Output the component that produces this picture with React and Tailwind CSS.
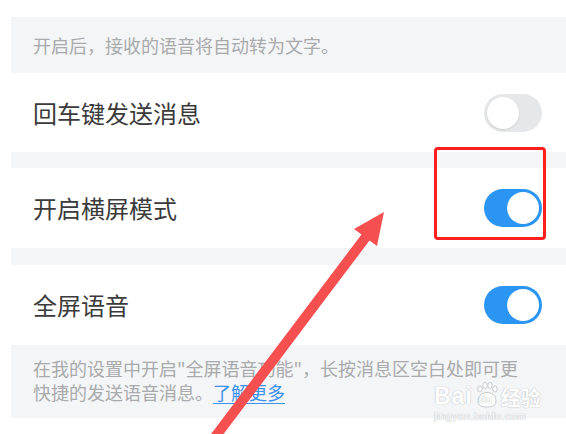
import React from "react";

function Toggle({ on }) {
  return (
    <div
      className={
        on
          ? "flex h-[38px] w-[58px] items-center justify-end rounded-full bg-[#2b95f4] p-[3px]"
          : "flex h-[38px] w-[58px] items-center justify-start rounded-full bg-[#e6e7e8] p-[3px]"
      }
    >
      <div
        className={
          on
            ? "h-[32px] w-[32px] rounded-full bg-white"
            : "h-[32px] w-[32px] rounded-full bg-white shadow-[0_1px_2px_rgba(0,0,0,0.12)]"
        }
      />
    </div>
  );
}

function Row({ label, on, height }) {
  return (
    <div
      className={`flex items-center justify-between bg-white pl-[22px] pr-[24px] ${height}`}
    >
      <span className="text-[24px] leading-none text-[#3b3b3b]">{label}</span>
      <Toggle on={on} />
    </div>
  );
}

function Watermark() {
  return (
    <div className="absolute left-[434px] top-[382px] flex flex-col items-start text-white [text-shadow:0_0_1px_#b9bcc2,0_0_1px_#b9bcc2]">
      <div className="flex items-end">
        <span className="text-[23px] font-bold leading-none tracking-[1px] font-['Liberation_Sans',sans-serif]">
          Bai
        </span>
        <div className="relative mx-[2px] h-[26px] w-[24px]">
          <svg width="24" height="26" viewBox="0 0 24 26" className="absolute left-0 top-0">
            <g fill="#ffffff" stroke="#b9bcc2" strokeWidth="0.8">
              <ellipse cx="5" cy="7" rx="2.2" ry="3" />
              <ellipse cx="10" cy="3.5" rx="2.2" ry="3" />
              <ellipse cx="15" cy="3.5" rx="2.2" ry="3" />
              <ellipse cx="20" cy="7" rx="2.2" ry="3" />
              <path d="M3 19 C3 13 8 10.5 12 10.5 C16 10.5 21 13 21 19 C21 23 18 25 12 25 C6 25 3 23 3 19 Z" />
            </g>
          </svg>
          <span className="absolute left-[4px] top-[12px] text-[11px] font-bold leading-none text-white font-['Liberation_Sans',sans-serif] [text-shadow:0_0_1px_#9a9ea6]">
            du
          </span>
        </div>
        <span className="text-[20px] font-bold leading-none">经验</span>
      </div>
      <span className="mt-[3px] text-[11px] leading-none tracking-[0.2px] font-['Liberation_Sans',sans-serif]">
        jingyan.baidu.com
      </span>
    </div>
  );
}

export default function App() {
  return (
    <div className="relative h-[434px] w-[566px] overflow-hidden bg-white pl-[11px] pt-[17px] font-['Noto_Sans_CJK_SC','Noto_Sans',sans-serif]">
      <div className="flex flex-col">
        <div className="flex h-[56px] items-center bg-[#f4f5f7] pl-[22px] text-[18px] leading-none text-[#a9aaac]">
          开启后，接收的语音将自动转为文字。
        </div>
        <Row label="回车键发送消息" on={false} height="h-[79px]" />
        <div className="h-[16px] bg-[#f4f5f7]" />
        <Row label="开启横屏模式" on={true} height="h-[80px]" />
        <div className="h-[17px] bg-[#f4f5f7]" />
        <Row label="全屏语音" on={true} height="h-[80px]" />
        <div className="h-[73px] bg-[#f4f5f7] pl-[22px] pt-[11px] text-[18px] leading-[24px] text-[#a9aaac]">
          <div className="whitespace-nowrap">
            在我的设置中开启"全屏语音功能"，长按消息区空白处即可更
          </div>
          <div className="whitespace-nowrap">
            快捷的发送语音消息。
            <span className="text-[#3a90ee] underline underline-offset-[3px]">了解更多</span>
          </div>
        </div>
      </div>

      <Watermark />

      <div className="absolute left-[434px] top-[147px] h-[93px] w-[112px] rounded-[4px] border-[3px] border-[#ff1f1f]" />

      <svg
        className="absolute left-0 top-0"
        width="566"
        height="434"
        viewBox="0 0 566 434"
      >
        <polygon
          points="384,212 377,246 369.5,240.5 210,452 202,446 361.5,234.5 354,229"
          fill="#f5504f"
        />
      </svg>
    </div>
  );
}
